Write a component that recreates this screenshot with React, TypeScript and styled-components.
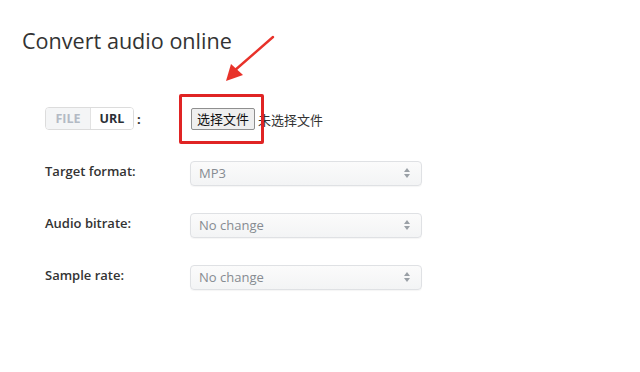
import React from "react";
import styled, { createGlobalStyle } from "styled-components";

const Global = createGlobalStyle`
  html, body { margin: 0; padding: 0; background: #fff; }
  body { font-family: "Open Sans", "Noto Sans CJK SC", sans-serif; color: #333; }
`;

const Page = styled.div`
  position: relative;
  width: 640px;
  height: 372px;
  overflow: hidden;
  padding: 26px 0 0 22px;
  box-sizing: border-box;
`;

const Title = styled.h1`
  margin: 0;
  font-size: 21.6px;
  line-height: 30px;
  font-weight: 400;
  color: #333;
`;

const Form = styled.div`
  display: grid;
  grid-template-columns: 145px 232px;
  grid-auto-rows: 26px;
  row-gap: 26px;
  margin: 52px 0 0 23px;
  align-items: center;
`;

const Label = styled.div`
  font-size: 13px;
  font-weight: 600;
  color: #333;
  line-height: 18px;
  margin-top: -5px;
`;

const ToggleRow = styled.div`
  display: flex;
  align-items: center;
  gap: 3px;
  margin-top: -5px;
`;

const Toggle = styled.div`
  display: flex;
  border: 1px solid #dcdcdc;
  border-radius: 4px;
  overflow: hidden;
  height: 21px;
`;

const Seg = styled.div<{ $active?: boolean }>`
  display: flex;
  align-items: center;
  justify-content: center;
  width: ${(p) => (p.$active ? "42px" : "44px")};
  font-size: 12.5px;
  font-weight: 700;
  color: ${(p) => (p.$active ? "#2b2f36" : "#b3bac4")};
  background: ${(p) => (p.$active ? "#fff" : "#f4f5f6")};
  border-left: ${(p) => (p.$active ? "1px solid #e2e2e2" : "none")};
`;

const Colon = styled.span`
  font-size: 13px;
  font-weight: 700;
  color: #333;
`;

const FileCell = styled.div`
  position: relative;
  display: flex;
  align-items: center;
  gap: 3px;
  margin-left: 1px;
  margin-top: -4px;
`;

const FileButton = styled.button`
  font-family: "Noto Sans CJK SC", sans-serif;
  font-size: 13px;
  color: #111;
  height: 22px;
  width: 64px;
  padding: 0;
  background: #efefef;
  border: 1px solid #8f8f8f;
  border-radius: 2px;
  line-height: 20px;
`;

const FileText = styled.span`
  font-family: "Noto Sans CJK SC", sans-serif;
  font-size: 13px;
  color: #333;
`;

const Highlight = styled.div`
  position: absolute;
  left: -12px;
  top: -14px;
  width: 79px;
  height: 44px;
  border: 3px solid #e02424;
  border-radius: 2px;
  pointer-events: none;
`;

const Select = styled.div`
  display: flex;
  align-items: center;
  justify-content: space-between;
  height: 25px;
  box-sizing: border-box;
  padding: 0 10px 0 8px;
  border: 1px solid #dfe1e4;
  border-radius: 4px;
  background: linear-gradient(#fbfbfb, #f3f4f5);
  box-shadow: 0 1px 1px rgba(0, 0, 0, 0.04);
  font-size: 13px;
  color: #868b91;
`;

const Arrow = styled.svg`
  position: absolute;
  left: 218px;
  top: 31px;
  pointer-events: none;
`;

const Carets = () => (
  <svg width="8" height="12" viewBox="0 0 8 12">
    <path d="M4 1 L7 5 L1 5 Z" fill="#9aa0a6" />
    <path d="M4 11 L7 7 L1 7 Z" fill="#9aa0a6" />
  </svg>
);

const fields = [
  { label: "Target format:", value: "MP3" },
  { label: "Audio bitrate:", value: "No change" },
  { label: "Sample rate:", value: "No change" },
];

export default function App() {
  return (
    <Page>
      <Global />
      <Title>Convert audio online</Title>
      <Form>
        <ToggleRow>
          <Toggle>
            <Seg>FILE</Seg>
            <Seg $active>URL</Seg>
          </Toggle>
          <Colon>:</Colon>
        </ToggleRow>
        <FileCell>
          <FileButton>选择文件</FileButton>
          <FileText>未选择文件</FileText>
          <Highlight />
        </FileCell>
        {fields.map((f) => (
          <React.Fragment key={f.label}>
            <Label>{f.label}</Label>
            <Select>
              <span>{f.value}</span>
              <Carets />
            </Select>
          </React.Fragment>
        ))}
      </Form>
      <Arrow width="60" height="56" viewBox="0 0 60 56">
        <path d="M55 6 L16 40" stroke="#e8322a" strokeWidth="2.4" strokeLinecap="round" />
        <path d="M8 50 L13 33 L25 44 Z" fill="#e8322a" />
      </Arrow>
    </Page>
  );
}
